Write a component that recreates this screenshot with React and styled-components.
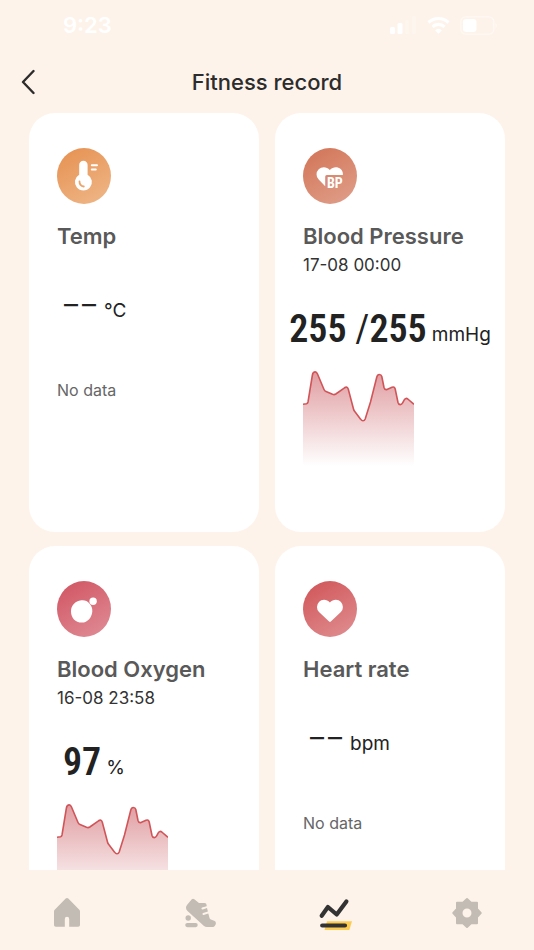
import React from "react";
import styled, { createGlobalStyle } from "styled-components";

const TREND_LINE =
  "M0 33.3 L3.5 32.8 Q4.7 32.4 5 31 L9.4 4 Q10 0.9 12.3 0.9 Q13.6 0.9 14.5 3 L21 18.5 Q21.6 20 23 20.5 L29.5 23.3 Q31.3 24 32.8 23 L41.5 16.8 Q44.4 15 45.3 18.3 L50.5 38 Q50.8 39.3 51.6 40.3 L57.6 48.2 Q58.6 49.8 60 49.8 Q61.5 49.8 62.2 48 L67.5 31 L73.8 6 Q74.5 3.5 76.3 3.5 Q78.3 3.5 78.8 5.5 L81 16.5 Q81.6 19 84 18.6 L89 16.3 Q91.6 15.2 92.2 18 L95 31.5 Q95.5 33.6 97.3 33.6 Q98.8 33.6 99.5 32 L101.4 28.7 Q102.8 26.5 104.8 28 L111 33.3";

const TemperatureIcon = () => (
  <svg width="54" height="56" viewBox="0 0 54 56" aria-hidden="true">
    <path
      fill="#fff"
      d="M22.200 17a4.200 4.200 0 0 1 8.400 0v9.700a8.500 8.500 0 1 1-8.400 0z"
    />
    <path
      d="M22.500 33.500a5 5 0 0 0 4.300 5"
      fill="none"
      stroke="#eba56c"
      strokeWidth="1.800"
      strokeLinecap="round"
    />
    <path
      d="M34.800 17.300h5.200M34.800 21.400h4"
      stroke="#fff"
      strokeWidth="2"
      strokeLinecap="round"
    />
  </svg>
);

const PressureIcon = () => (
  <svg width="54" height="56" viewBox="0 0 54 56" aria-hidden="true">
    <path
      fill="#fff"
      d="M22.2 38.3 15.7 31.6a7.2 7.2 0 0 1 0-10.3c3.1-3 8-2.8 11.1.6 3.2-3.4 7.9-3.6 10.9-.8 1.7 1.6 2.4 3.8 2.2 6H23.8a1.6 1.6 0 0 0-1.6 1.6z"
    />
    <BpText x="24" y="40">
      BP
    </BpText>
  </svg>
);

const OxygenIcon = () => (
  <svg width="54" height="56" viewBox="0 0 54 56" aria-hidden="true">
    <path
      fill="#fff"
      d="M24.2 19.3c3.5-.4 6.2.5 8 2.9 2.1 2.5 3.4 4.6 3.1 8.2-.3 5.500-4.500 11.200-10.500 11.200-6.500 0-10.800-5-10.800-11.200 0-5.600 4.200-10.600 10.200-11.100z"
    />
    <circle cx="36.100" cy="20.200" r="3.700" fill="#fff" />
  </svg>
);

const HeartIcon = () => (
  <svg width="54" height="56" viewBox="0 0 54 56" aria-hidden="true">
    <path
      fill="#fff"
      d="M25.800 40.300 16 31a7.300 7.300 0 0 1 0-10.100c3-3 8-2.700 10.900.6 2.900-3.300 8-3.600 11-.6a7.300 7.300 0 0 1 0 10.100l-9.800 9.300a1.700 1.700 0 0 1-2.300 0z"
    />
  </svg>
);

const Trend = ({ id }) => (
  <Chart width="111" height="98" viewBox="0 0 111 98" aria-hidden="true">
    <defs>
      <linearGradient id={id} x1="0" y1="0" x2="0" y2="1">
        <stop offset="0" stopColor="#e09da1" />
        <stop offset="1" stopColor="#e09da1" stopOpacity="0" />
      </linearGradient>
    </defs>
    <path d={`${TREND_LINE} V95 H0 Z`} fill={`url(#${id})`} />
    <path d={TREND_LINE} fill="none" stroke="#d15558" strokeWidth="1.600" />
  </Chart>
);

const Record = ({ record }) => {
  const { id, title, date, value, unit, icon, from, to, wide } = record;
  return (
    <Card>
      <Badge $from={from} $to={to}>
        {icon}
      </Badge>
      <CardTitle>{title}</CardTitle>
      {date ? (
        <>
          <DateText>{date}</DateText>
          <Reading $wide={wide}>
            <Value>{value}</Value>
            <Unit>{unit}</Unit>
          </Reading>
          <Trend id={id} />
        </>
      ) : (
        <>
          <EmptyReading>
            <Dashes>
              <span>–</span>
              <span>–</span>
            </Dashes>
            <Unit>{unit}</Unit>
          </EmptyReading>
          <NoData>No data</NoData>
        </>
      )}
    </Card>
  );
};

const records = [
  {
    id: "temp",
    title: "Temp",
    unit: "°C",
    icon: <TemperatureIcon />,
    from: "#e6904f",
    to: "#efb88a"
  },
  {
    id: "pressure",
    title: "Blood Pressure",
    date: "17-08 00:00",
    value: (
      <>
        255 <i>/</i>255
      </>
    ),
    unit: "mmHg",
    icon: <PressureIcon />,
    from: "#d27355",
    to: "#e0a08c",
    wide: true
  },
  {
    id: "oxygen",
    title: "Blood Oxygen",
    date: "16-08 23:58",
    value: "97",
    unit: "%",
    icon: <OxygenIcon />,
    from: "#d05360",
    to: "#e08e98"
  },
  {
    id: "heart",
    title: "Heart rate",
    unit: "bpm",
    icon: <HeartIcon />,
    from: "#d05356",
    to: "#e09093"
  }
];

const App = () => (
  <Screen>
    <GlobalStyle />
    <StatusBar>
      <Clock>9:23</Clock>
      <StatusIcons>
        <svg width="27" height="18" viewBox="0 0 27 18" aria-hidden="true">
          <g fill="#fff">
            <rect x="0" y="11" width="5" height="7" rx="1.500" />
            <rect x="7.500" y="7" width="5" height="11" rx="1.500" />
            <rect x="15" y="4" width="4" height="14" rx="1.500" opacity=".25" />
            <rect x="22" y="0" width="4" height="18" rx="1.500" opacity=".25" />
          </g>
        </svg>
        <svg width="23" height="18" viewBox="0 0 22 18" aria-hidden="true">
          <g fill="none" stroke="#fff" strokeWidth="3.200">
            <path d="M1 6.500a14.500 14.500 0 0 1 20 0" />
            <path d="M5 10.800a8.800 8.800 0 0 1 12 0" />
          </g>
          <path fill="#fff" d="M11 17.800 7.600 14.300a5 5 0 0 1 6.800 0z" />
        </svg>
        <svg width="38" height="19" viewBox="0 0 38 19" aria-hidden="true">
          <rect
            x=".8"
            y=".8"
            width="33"
            height="17.400"
            rx="5"
            fill="none"
            stroke="#fff"
            strokeWidth="1.300"
            opacity=".5"
          />
          <rect x="3" y="3" width="13.500" height="13" rx="3" fill="#fff" />
          <path d="M35.500 6.500q3 3 0 6z" fill="#fff" opacity=".5" />
        </svg>
      </StatusIcons>
    </StatusBar>
    <Header>
      <BackButton aria-label="Back">
        <svg width="14" height="26" viewBox="0 0 14 26" aria-hidden="true">
          <path
            d="M12.500 2 2 13l10.500 11"
            fill="none"
            stroke="#2c2c2c"
            strokeWidth="2.400"
            strokeLinecap="round"
            strokeLinejoin="round"
          />
        </svg>
      </BackButton>
      <PageTitle>Fitness record</PageTitle>
    </Header>
    <Records>
      {records.map(record => (
        <Record key={record.id} record={record} />
      ))}
    </Records>
    <TabBar>
      <Tab aria-label="Home">
        <svg width="36" height="36" viewBox="0 0 36 36" aria-hidden="true">
          <path
            fill="#c2bcb4"
            d="M16.700 4.600a1.900 1.900 0 0 1 2.600 0l11 11.200c.5.600.7 1.100.7 1.800v13.200c0 1.200-.7 1.900-1.900 1.900h-8.900V25a2.200 2.200 0 0 0-4.400 0v7.700H6.900c-1.200 0-1.900-.7-1.900-1.900V17.600c0-.7.2-1.200.7-1.800z"
          />
        </svg>
      </Tab>
      <Tab aria-label="Activity">
        <svg width="36" height="36" viewBox="0 0 36 36" aria-hidden="true">
          <g fill="#c2bcb4">
            <path d="M9.800 5.200q1.200-1 2.500 0L17 8.900h5.400q2.200 0 2.200 2v1.300l-4.500 1.400a.9.900 0 0 0 .6 1.800l4.300-1.300.9 3.500-4.800 1.500a.9.900 0 0 0 .6 1.800l4.600-1.400 1.300 4.700q.3 1 1.300 1.400l3.200 1.100q2.100.8 1.800 2.700-.6 3.600-4.300 3.600h-4.700q-1.600 0-2.900-1.100L5.500 17q-1.800-1.800-1.500-3.700.2-1.300 1.200-2.500z" />
            <circle cx="6.200" cy="24" r="2.700" />
            <rect x="3.200" y="29" width="12.500" height="4.200" rx="2.100" />
          </g>
        </svg>
      </Tab>
      <Tab aria-label="Records" aria-current="page">
        <svg width="36" height="36" viewBox="0 0 36 36" aria-hidden="true">
          <path fill="#fccc50" d="M11 27.300h25l-2.700 8.700H8.500z" />
          <path
            d="M5.700 21.700 11.900 13l8.800 7.500L30.400 7.500M6.200 31.500H29"
            fill="none"
            stroke="#333"
            strokeWidth="4.200"
            strokeLinecap="round"
            strokeLinejoin="round"
          />
        </svg>
      </Tab>
      <Tab aria-label="Settings">
        <svg width="36" height="36" viewBox="0 0 36 36" aria-hidden="true">
          <path
            fill="#c2bcb4"
            fillRule="evenodd"
            stroke="#c2bcb4"
            strokeWidth="2"
            strokeLinejoin="round"
            d="M18 5l4 3.800h6v6l3.700 4.200-3.700 4.200v6h-6L18 33l-4-3.800H8v-6L4.300 19 8 14.800v-6h6zM18 13.500a5.500 5.500 0 1 0 0 11 5.500 5.500 0 0 0 0-11z"
          />
        </svg>
      </Tab>
    </TabBar>
  </Screen>
);

export default App;

const GlobalStyle = createGlobalStyle`
  * {
    box-sizing: border-box;
  }

  body {
    margin: 0;
    background: #fdf3ea;
    font-family: Inter, "Liberation Sans", sans-serif;
  }
`;

const Screen = styled.div`
  height: 100vh;
  display: flex;
  flex-direction: column;
  background: #fdf3ea;
`;

const StatusBar = styled.div`
  height: 50px;
  flex: none;
  display: flex;
  align-items: center;
  justify-content: space-between;
  padding: 0 36px 0 63px;
`;

const Clock = styled.span`
  color: #fff;
  font-size: 22px;
  font-weight: 600;
`;

const StatusIcons = styled.div`
  display: flex;
  align-items: center;
  gap: 10px;

  svg {
    display: block;
  }
`;

const Header = styled.header`
  height: 63px;
  flex: none;
  display: grid;
  grid-template-columns: 48px 1fr 48px;
  align-items: center;
  padding: 0 8px;
`;

const BackButton = styled.button`
  height: 44px;
  display: flex;
  align-items: center;
  padding: 0 0 0 13px;
  border: 0;
  background: none;
`;

const PageTitle = styled.h1`
  margin: 0;
  color: #2c2c2c;
  font-size: 22px;
  font-weight: 500;
  line-height: 30px;
  text-align: center;
`;

const Records = styled.main`
  flex: 1;
  min-height: 0;
  overflow: hidden;
  display: grid;
  grid-template-columns: 1fr 1fr;
  grid-auto-rows: max-content;
  gap: 14px 16px;
  padding: 0 29px;
`;

const Card = styled.section`
  min-width: 0;
  min-height: 419px;
  padding: 35px 28px;
  border-radius: 26px;
  background: #fff;
`;

const Badge = styled.div`
  width: 54px;
  height: 56px;
  border-radius: 50%;
  background: linear-gradient(
    150deg,
    ${props => props.$from},
    ${props => props.$to}
  );

  svg {
    display: block;
  }
`;

const BpText = styled.text`
  fill: #fff;
  font-family: "Roboto Condensed", "Liberation Sans Narrow", sans-serif;
  font-size: 14px;
  font-weight: 700;
`;

const CardTitle = styled.h2`
  margin: 17px 0 0;
  color: #595959;
  font-size: 22px;
  font-weight: 600;
  line-height: 30px;
  white-space: nowrap;
`;

const DateText = styled.p`
  margin: 2px 0 0;
  color: #333;
  font-size: 17px;
  line-height: 24px;
`;

// the unit sits a little above the foot of the figures
const Reading = styled.div`
  height: 46px;
  display: flex;
  align-items: flex-end;
  justify-content: ${props => (props.$wide ? "center" : "flex-start")};
  gap: 5px;
  margin: ${props => (props.$wide ? "29px -16px 0" : "29px 0 0 6px")};

  > :last-child {
    margin-bottom: 4px;
  }
`;

const Value = styled.span`
  color: #222;
  font-family: "Roboto Condensed", "Liberation Sans Narrow", Roboto, sans-serif;
  font-size: 38px;
  font-weight: 600;
  line-height: 46px;
  white-space: nowrap;

  i {
    font-style: normal;
    font-weight: 400;
  }
`;

const Unit = styled.span`
  color: #222;
  font-size: 19px;
  line-height: 26px;
`;

const EmptyReading = styled.div`
  display: flex;
  align-items: center;
  gap: 8px;
  margin: 47px 0 0 7px;
`;

const Dashes = styled.span`
  display: flex;
  align-self: flex-start;
  gap: 4px;
  color: #222;
  font-size: 28px;
  line-height: 12px;
`;

const NoData = styled.p`
  margin: 54px 0 0;
  color: #666;
  font-size: 16px;
  line-height: 24px;
`;

const Chart = styled.svg`
  display: block;
  margin-top: 19px;
`;

const TabBar = styled.nav`
  height: 80px;
  flex: none;
  display: grid;
  grid-template-columns: repeat(4, 1fr);
  padding-bottom: 6px;
  background: #fdf3ea;
`;

const Tab = styled.button`
  display: flex;
  align-items: center;
  justify-content: center;
  padding: 10px 0 0;
  border: 0;
  background: none;
`;
